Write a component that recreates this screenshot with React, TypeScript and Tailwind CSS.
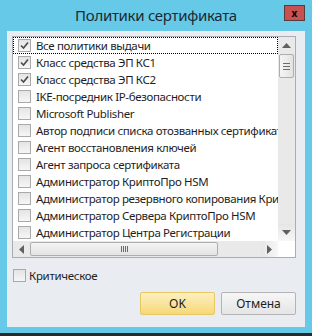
import type { ReactNode } from "react";

const ROWS: { label: string; checked: boolean }[] = [
  { label: "Все политики выдачи", checked: true },
  { label: "Класс средства ЭП КС1", checked: true },
  { label: "Класс средства ЭП КС2", checked: true },
  { label: "IKE-посредник IP-безопасности", checked: false },
  { label: "Microsoft Publisher", checked: false },
  { label: "Автор подписи списка отозванных сертификатов", checked: false },
  { label: "Агент восстановления ключей", checked: false },
  { label: "Агент запроса сертификата", checked: false },
  { label: "Администратор КриптоПро HSM", checked: false },
  { label: "Администратор резервного копирования КриптоПро HSM", checked: false },
  { label: "Администратор Сервера КриптоПро HSM", checked: false },
  { label: "Администратор Центра Регистрации", checked: false },
];

function CheckBox({ checked }: { checked: boolean }) {
  return (
    <span className="relative w-[13px] h-[13px] shrink-0 border border-[#a9a9a9] bg-gradient-to-b from-[#e4e4e4] to-[#f6f6f6]">
      {checked && (
        <svg className="absolute left-[1px] top-[1px]" width="9" height="9" viewBox="0 0 9 9">
          <path d="M1 4.5 L3.5 7 L8 1.5" fill="none" stroke="#4a4a4a" strokeWidth="1.6" />
        </svg>
      )}
    </span>
  );
}

function Button({ children, primary }: { children: ReactNode; primary?: boolean }) {
  return (
    <button
      className={
        primary
          ? "w-[75px] h-[23px] rounded-[2px] border border-[#e8c766] bg-gradient-to-b from-[#fdf0c0] to-[#f6d875] text-[12px] text-[#1e1e1e]"
          : "w-[75px] h-[23px] rounded-[2px] border border-[#b4b4b4] bg-gradient-to-b from-[#f6f6f6] to-[#e5e5e5] text-[12px] text-[#1e1e1e]"
      }
    >
      {children}
    </button>
  );
}

export default function App() {
  return (
    <div className="w-[312px] h-[336px] flex flex-col bg-[#66c9e8] font-['Noto_Sans',sans-serif]">
      {/* title bar */}
      <div className="relative h-[31px] shrink-0 flex items-center justify-center">
        <span className="text-[15px] leading-none tracking-[-0.3px] text-[#1c2a33] -mt-[1px]">Политики сертификата</span>
        <div className="absolute right-[7px] top-[5px] w-[21px] h-[16px] bg-[#c75050] border border-[#5a3b3b] flex items-center justify-center">
          <span className="text-[10px] font-bold leading-none text-black -mt-[1px]">x</span>
        </div>
      </div>

      {/* client area */}
      <div className="mx-[7px] h-[296px] shrink-0 bg-[#e9ecf0] flex flex-col pt-[5px] px-[5px]">
        <div className="w-[284px] h-[222px] border border-[#abadb3] bg-white grid grid-cols-[265px_17px] grid-rows-[204px_16px]">
          <div className="overflow-hidden">
            {ROWS.map((row, i) => (
              <div
                key={row.label}
                className={
                  i === 0
                    ? "h-[17px] flex items-center gap-[5px] pl-[4px] border border-dotted border-black whitespace-nowrap"
                    : "h-[17px] flex items-center gap-[5px] pl-[4px] border border-transparent whitespace-nowrap"
                }
              >
                <CheckBox checked={row.checked} />
                <span className="text-[11.5px] leading-none tracking-[-0.35px] text-[#1e1e1e]">{row.label}</span>
              </div>
            ))}
          </div>

          {/* vertical scrollbar */}
          <div className="flex flex-col items-center bg-[#e9e9ea]">
            <div className="h-[17px] w-full flex items-center justify-center">
              <svg width="9" height="5" viewBox="0 0 9 5">
                <path d="M0 5 L4.5 0 L9 5 Z" fill="#606060" />
              </svg>
            </div>
            <div className="w-[15px] h-[24px] rounded-[2px] border border-[#adadad] bg-gradient-to-r from-[#f4f4f4] to-[#e3e3e3] flex flex-col items-center justify-center gap-[2px]">
              <span className="w-[7px] h-px bg-[#6b6b6b]" />
              <span className="w-[7px] h-px bg-[#6b6b6b]" />
              <span className="w-[7px] h-px bg-[#6b6b6b]" />
            </div>
            <div className="flex-1" />
            <div className="h-[17px] w-full flex items-center justify-center bg-gradient-to-b from-[#e6e6e6] to-[#f7f7f7]">
              <svg width="9" height="5" viewBox="0 0 9 5">
                <path d="M0 0 L9 0 L4.5 5 Z" fill="#606060" />
              </svg>
            </div>
          </div>

          {/* horizontal scrollbar */}
          <div className="flex items-center bg-[#e9e9ea]">
            <div className="w-[17px] h-full flex items-center justify-center">
              <svg width="5" height="9" viewBox="0 0 5 9">
                <path d="M5 0 L0 4.5 L5 9 Z" fill="#606060" />
              </svg>
            </div>
            <div className="w-[188px] h-[14px] rounded-[2px] border border-[#adadad] bg-gradient-to-b from-[#f4f4f4] to-[#e3e3e3] flex items-center justify-center gap-[1px]">
              <span className="w-px h-[6px] bg-[#6b6b6b]" />
              <span className="w-px h-[6px] bg-[#6b6b6b]" />
              <span className="w-px h-[6px] bg-[#6b6b6b]" />
              <span className="w-px h-[6px] bg-[#6b6b6b]" />
            </div>
            <div className="flex-1" />
            <div className="w-[17px] h-full flex items-center justify-center bg-gradient-to-r from-[#e6e6e6] to-[#f7f7f7]">
              <svg width="5" height="9" viewBox="0 0 5 9">
                <path d="M0 0 L5 4.5 L0 9 Z" fill="#606060" />
              </svg>
            </div>
          </div>
          <div className="bg-white" />
        </div>

        <div className="mt-[11px] ml-[1px] h-[13px] flex items-center gap-[3px]">
          <CheckBox checked={false} />
          <span className="text-[11.5px] leading-none tracking-[-0.3px] text-[#1e1e1e]">Критическое</span>
        </div>

        <div className="mt-[10px] w-[284px] flex justify-end gap-[6px]">
          <Button primary>OK</Button>
          <Button>Отмена</Button>
        </div>
      </div>

      <div className="flex-1" />
      <div className="h-[3px] shrink-0 bg-[#2a2a2a]" />
    </div>
  );
}
